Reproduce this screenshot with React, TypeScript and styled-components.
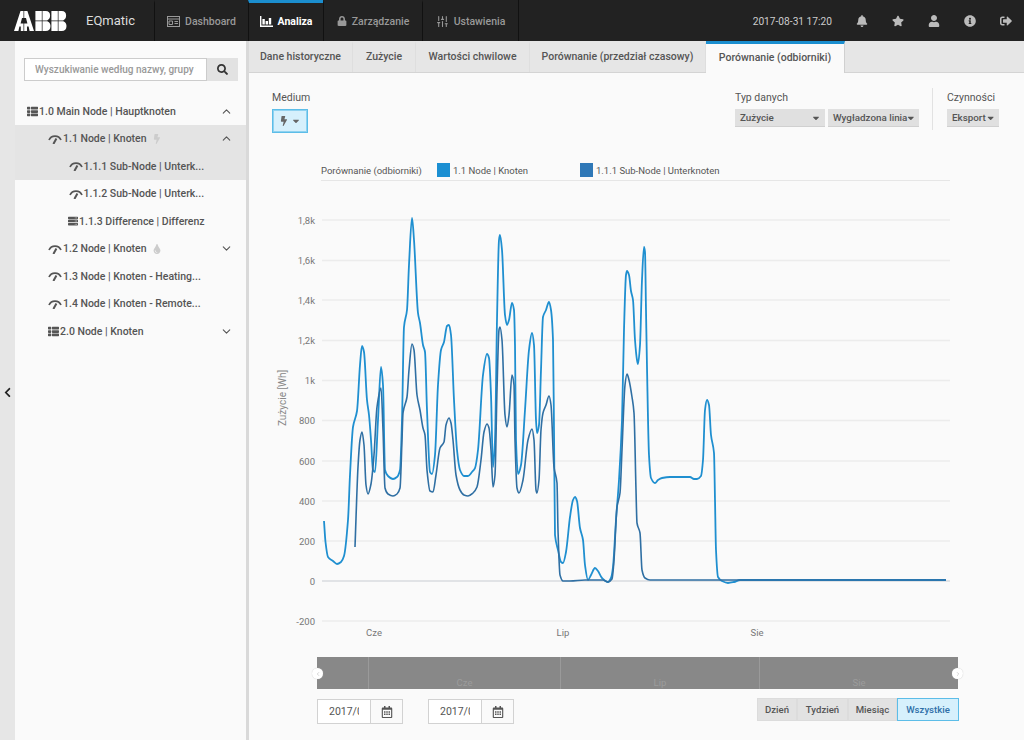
import React from "react";
import styled, { createGlobalStyle } from "styled-components";
import { ChevronDown, ChevronLeft, ChevronRight, ChevronUp, SlidersVertical } from "lucide-react";
import {
	FaBell,
	FaBolt,
	FaCaretDown,
	FaChevronLeft,
	FaInfoCircle,
	FaLock,
	FaRegCalendarAlt,
	FaSearch,
	FaServer,
	FaSignOutAlt,
	FaStar,
	FaThList,
	FaTint,
	FaUser,
} from "react-icons/fa";

const GlobalStyle = createGlobalStyle`
	html, body {
		margin: 0;
		padding: 0;
		background: #fafafa;
	}
	* {
		box-sizing: border-box;
	}
	body {
		font-family: Roboto, "Liberation Sans", sans-serif;
		font-size: 10.5px;
		color: #555;
	}
`;

const lightSeries: number[][] = [
	[324, 521], [325.5, 542], [328, 557], [333, 561], [337, 564], [341, 562], [344, 556], [348, 520], [350, 475], [353, 427], [357, 411], [360, 365], [362, 346], [364, 352], [367, 400], [369, 415], [371, 440], [373, 470], [375, 472], [378, 420], [381, 367], [383, 385], [385, 470], [388, 476], [393, 479], [397, 477], [400, 470], [402, 420], [404, 327], [407, 310], [409, 265], [412, 218], [414, 240], [418, 313], [420, 323], [423, 345], [425, 352], [427, 410], [430, 472], [432, 474], [435, 455], [438, 385], [441, 350], [444, 342], [447, 326], [449, 325], [451, 335], [454, 400], [457, 450], [460, 470], [464, 476], [468, 476], [472, 472], [475, 468], [478, 450], [483, 375], [487, 354], [489, 358], [491, 395], [493, 467], [495, 440], [497, 320], [499, 240], [500, 235], [502, 250], [505, 315], [507, 325], [509, 320], [512, 303], [514, 310], [515, 345], [516, 440], [518, 474], [521, 465], [525, 410], [529, 350], [532, 333], [534, 345], [536, 420], [537, 433], [539, 425], [541, 370], [543, 317], [546, 310], [549, 302], [551, 310], [553, 340], [554, 430], [555, 535], [558, 550], [561, 562], [563, 563], [566, 552], [570, 517], [573, 500], [575, 497], [577, 501], [580, 528], [583, 540], [585, 565], [588, 580], [591, 575], [595, 568], [598, 571], [602, 578], [608, 582], [611, 578], [613, 567], [616, 520], [619, 480], [622, 420], [624, 330], [626, 275], [627, 271], [629, 275], [631, 291], [633, 300], [635, 340], [637, 360], [638, 364], [640, 345], [642, 280], [644, 247], [645, 252], [646, 310], [647, 367], [649, 455], [651, 478], [655, 483], [658, 480], [662, 478], [670, 477], [690, 477], [694, 479], [697, 479], [701, 476], [703, 460], [705, 410], [707, 400], [709, 405], [711, 435], [714, 453], [715, 500], [716, 550], [718, 577], [722, 581], [728, 583], [734, 582], [740, 580], [946, 580],
];

const darkSeries: number[][] = [
	[355, 547], [358, 467], [360, 440], [362, 432], [364, 445], [366, 485], [368, 494], [371, 484], [374, 455], [377, 407], [381, 388], [383, 430], [385, 488], [388, 494], [393, 496], [397, 494], [400, 488], [402, 440], [403, 413], [407, 397], [409, 370], [412, 344], [414, 350], [417, 395], [420, 410], [423, 428], [425, 435], [427, 470], [430, 491], [433, 492], [436, 475], [440, 448], [444, 442], [446, 425], [449, 418], [451, 423], [453, 440], [456, 475], [460, 490], [464, 495], [468, 496], [473, 493], [477, 487], [481, 460], [484, 432], [487, 424], [489, 428], [491, 450], [493, 487], [495, 475], [497, 390], [499, 330], [500, 327], [502, 340], [505, 415], [507, 427], [509, 415], [512, 375], [514, 385], [515, 440], [517, 488], [519, 493], [523, 480], [528, 440], [532, 429], [534, 440], [536, 490], [537, 493], [539, 480], [541, 430], [543, 413], [546, 405], [549, 396], [551, 405], [554, 467], [557, 483], [558, 530], [560, 575], [563, 581], [570, 581], [585, 580], [603, 580], [608, 582], [612, 579], [614, 560], [617, 507], [620, 493], [622, 450], [625, 385], [627, 374], [629, 380], [632, 397], [634, 413], [636, 490], [637, 523], [640, 533], [642, 570], [645, 578], [650, 580], [946, 580],
];

// same idea as d3 curveMonotoneX, peaks stay at their points
const smoothPath = (pts: number[][]) => {
	const slopes: number[] = [];
	for (let i = 0; i < pts.length - 1; i++) {
		slopes.push((pts[i + 1][1] - pts[i][1]) / (pts[i + 1][0] - pts[i][0]));
	}
	const tangents = pts.map((_, i) => {
		if (i === 0) return slopes[0];
		if (i === pts.length - 1) return slopes[i - 1];
		const a = slopes[i - 1];
		const b = slopes[i];
		if (a * b <= 0) return 0;
		return (2 * a * b) / (a + b);
	});
	let d = `M${pts[0][0]} ${pts[0][1]}`;
	for (let i = 0; i < pts.length - 1; i++) {
		const dx = (pts[i + 1][0] - pts[i][0]) / 3;
		d += `C${pts[i][0] + dx} ${pts[i][1] + tangents[i] * dx} ${pts[i + 1][0] - dx} ${pts[i + 1][1] - tangents[i + 1] * dx} ${pts[i + 1][0]} ${pts[i + 1][1]}`;
	}
	return d;
};

const yTicks = [
	["1,8k", 220],
	["1,6k", 260.5],
	["1,4k", 300],
	["1,2k", 340.5],
	["1k", 380.5],
	["800", 420.5],
	["600", 461],
	["400", 501],
	["200", 541],
	["0", 581],
	["-200", 621],
] as const;

const AbbLogo = () => (
	<svg width="53" height="20" viewBox="0 0 53 20" fill="#fff">
		<polygon points="0,20 6.5,0 9.5,0 9.5,7 8,7 6.6,12.5 9.5,12.5 9.5,20 6.8,20 6.8,15.5 5.4,15.5 4.4,20" />
		<polygon points="10.2,0 13.4,0 20,20 15.6,20 14.6,15.5 13,15.5 13,20 10.2,20 10.2,12.5 13.4,12.5 12,7 10.2,7" />
		<path d="M21.4 0h6.4v9.5h-6.4zM21.4 10.2h6.4V20h-6.4zM28.5 0h3.2c3 0 4.4 1.6 4.4 4.6 0 2.4-1 4-3 4.9h-4.6zM28.5 10.2h4.8c2 .8 3.2 2.4 3.2 4.8 0 3.2-1.7 5-4.8 5h-3.2z" />
		<path d="M37.4 0h6.4v9.5h-6.4zM37.4 10.2h6.4V20h-6.4zM44.5 0h3.2c3 0 4.4 1.6 4.4 4.6 0 2.4-1 4-3 4.9h-4.6zM44.5 10.2h4.8c2 .8 3.2 2.4 3.2 4.8 0 3.2-1.7 5-4.8 5h-3.2z" />
	</svg>
);

const GaugeIcon = () => (
	<svg width="14" height="10" viewBox="0 0 14 10" fill="none" stroke="#555">
		<path d="M1 6A6.6 6.6 0 0 1 13 6" strokeWidth="1.7" />
		<path d="M5.4 10L8.4 4.6" strokeWidth="2" />
	</svg>
);

const DashboardIcon = () => (
	<svg width="13" height="11" viewBox="0 0 13 11" fill="none" stroke="#999">
		<rect x="0.5" y="0.5" width="12" height="10" />
		<path d="M0.5 3h12M2 5h3.5v3.5H2zM7.5 5.5H11M7.5 7.5H11" />
	</svg>
);

const AnalizaIcon = () => (
	<svg width="13" height="11" viewBox="0 0 13 11" fill="#fff">
		<path d="M0 0h1.4v9.6H13V11H0zM2.4 3h2.4v5.6H2.4zM5.6 5h2.4v3.6H5.6zM8.8 2h2.4v6.6H8.8z" />
	</svg>
);

const Page = styled.div`
	width: 1024px;
	height: 740px;
	display: flex;
	flex-direction: column;
	overflow: hidden;
`;

const TopBar = styled.header`
	height: 41px;
	flex: none;
	display: flex;
	align-items: stretch;
	background: #222;
`;

const LogoBox = styled.div`
	width: 86px;
	padding-left: 14px;
	display: flex;
	align-items: center;
`;

const Brand = styled.div`
	width: 68px;
	display: flex;
	align-items: center;
	font-size: 13px;
	color: #ddd;
`;

const NavItem = styled.div<{ $active?: boolean; $w: number }>`
	width: ${(p) => p.$w}px;
	display: flex;
	align-items: center;
	justify-content: center;
	gap: 5px;
	border-left: 1px solid #111;
	border-top: 3px solid ${(p) => (p.$active ? "#1b8ecf" : "transparent")};
	padding-bottom: 2px;
	font-weight: ${(p) => (p.$active ? 700 : 500)};
	color: ${(p) => (p.$active ? "#fff" : "#999")};
`;

const NavEnd = styled.div`
	flex: 1;
	border-left: 1px solid #111;
	display: flex;
	align-items: center;
	justify-content: flex-end;
`;

const Clock = styled.span`
	color: #ccc;
	font-size: 10.2px;
	padding-top: 1px;
	margin-right: 12px;
`;

const TopIcon = styled.span`
	width: 36px;
	display: flex;
	justify-content: center;
	color: #bbb;
	font-size: 12px;
`;

const Body = styled.div`
	flex: 1;
	display: flex;
	min-height: 0;
`;

const CollapseStrip = styled.div`
	width: 15px;
	flex: none;
	background: #e6e6e6;
	display: flex;
	align-items: center;
	justify-content: center;
	font-size: 11px;
	color: #222;
	padding-top: 3px;
`;

const Sidebar = styled.aside`
	width: 234px;
	flex: none;
	background: #fafafa;
	border-right: 3px solid #d9d9d9;
	padding-top: 17px;
`;

const SearchRow = styled.div`
	display: flex;
	height: 23px;
	margin: 0 8px 16.5px 9px;
`;

const SearchInput = styled.input`
	width: 183px;
	height: 23px;
	border: 1px solid #ccc;
	background: #fff;
	padding: 0 10px;
	font: 500 10px Roboto, sans-serif;
	color: #888;
	&::placeholder {
		color: #999;
		opacity: 1;
	}
`;

const SearchButton = styled.button`
	width: 31px;
	border: none;
	background: #e2e2e2;
	color: #333;
	font-size: 11px;
	display: flex;
	align-items: center;
	justify-content: center;
`;

const TreeRow = styled.div<{ $indent: number; $selected?: boolean }>`
	height: 27.5px;
	display: flex;
	align-items: center;
	gap: 1px;
	padding-left: ${(p) => p.$indent}px;
	padding-right: 13px;
	background: ${(p) => (p.$selected ? "#e4e4e4" : "transparent")};
	font-weight: 500;
	color: #555;
	white-space: nowrap;
	svg {
		flex: none;
	}
`;

const TreeLabel = styled.span`
	flex: 1;
	display: flex;
	align-items: center;
	gap: 5px;
`;

const Hint = styled.span`
	color: #ccc;
	font-size: 10px;
	display: flex;
`;

const Main = styled.main`
	flex: 1;
	min-width: 0;
	background: #fafafa;
	display: flex;
	flex-direction: column;
`;

const Tabs = styled.nav`
	height: 32px;
	flex: none;
	display: flex;
	background: #e6e6e6;
	border-bottom: 1px solid #d4d4d4;
`;

const Tab = styled.div<{ $active?: boolean; $w: number }>`
	width: ${(p) => p.$w}px;
	display: flex;
	align-items: center;
	justify-content: center;
	font-weight: 500;
	color: #555;
	background: ${(p) => (p.$active ? "#fafafa" : "transparent")};
	border-top: 3px solid ${(p) => (p.$active ? "#1b8ecf" : "transparent")};
	border-right: 1px solid ${(p) => (p.$active ? "#d0d0d0" : "#dedede")};
	margin-bottom: ${(p) => (p.$active ? "-1px" : "0")};
	padding-bottom: 3px;
`;

const Toolbar = styled.div`
	height: 90px;
	flex: none;
	display: flex;
	padding: 15px 25px 0 23px;
`;

const Group = styled.div`
	display: flex;
	flex-direction: column;
	gap: 2px;
`;

const GroupLabel = styled.span`
	font-size: 10.5px;
	color: #555;
	height: 19px;
	line-height: 19px;
	white-space: nowrap;
`;

const GroupRow = styled.div`
	display: flex;
	gap: 3px;
`;

const MediumButton = styled.div`
	width: 36px;
	height: 24px;
	border: 1px solid #5cbde8;
	box-shadow: inset 0 0 0 1px #8fd2f0;
	background: #d6f0fc;
	color: #666;
	display: flex;
	align-items: center;
	justify-content: center;
	gap: 2px;
	font-size: 10px;
`;

const Select = styled.div<{ $w: number }>`
	width: ${(p) => p.$w}px;
	height: 18px;
	background: #e0e0e0;
	border-bottom: 1px solid #d0d0d0;
	display: flex;
	align-items: center;
	justify-content: space-between;
	padding: 0 4px 0 5px;
	font-size: 9.8px;
	font-weight: 500;
	color: #555;
	white-space: nowrap;
`;

const Spacer = styled.div`
	flex: 1;
`;

const Divider = styled.div`
	width: 1px;
	height: 42px;
	background: #e2e2e2;
	margin: 0 14px 0 13px;
`;

const Legend = styled.div`
	height: 18px;
	flex: none;
	margin: 0 74px 0 72px;
	display: flex;
	align-items: flex-start;
	border-bottom: 1px solid #e6e6e6;
	font-size: 9.5px;
	color: #555;
`;

const LegendTitle = styled.span`
	width: 116px;
	line-height: 16px;
`;

const LegendItem = styled.div<{ $w: number }>`
	width: ${(p) => p.$w}px;
	display: flex;
	align-items: flex-start;
	gap: 3px;
	line-height: 16px;
`;

const Swatch = styled.span<{ $color: string }>`
	width: 13px;
	height: 14px;
	background: ${(p) => p.$color};
`;

const ChartSvg = styled.svg`
	display: block;
	flex: none;
	font-family: Roboto, sans-serif;
	font-size: 9.5px;
	fill: #777;
`;

const Navigator = styled.div`
	position: relative;
	height: 32px;
	flex: none;
	margin: 7px 66px 0 68px;
	background: #888;
	display: grid;
	grid-template-columns: 52px 192px 199px 198px;
`;

const NavigatorCell = styled.div`
	border-right: 1px solid #9a9a9a;
	display: flex;
	align-items: flex-end;
	justify-content: center;
	padding-bottom: 1px;
	font-size: 9.5px;
	color: #9c9c9c;
	&:last-of-type {
		border-right: none;
	}
`;

const Handle = styled.span<{ $side: "left" | "right" }>`
	position: absolute;
	top: 11px;
	${(p) => p.$side}: -5px;
	width: 11px;
	height: 11px;
	border-radius: 50%;
	background: #fff;
	box-shadow: 0 0 1px #bbb;
	color: #aaa;
	display: flex;
	align-items: center;
	justify-content: center;
`;

const BottomRow = styled.div`
	flex: none;
	display: flex;
	align-items: flex-start;
	margin: 9px 65px 0 68px;
`;

const DateBox = styled.div`
	width: 86px;
	height: 25px;
	margin-top: 1px;
	display: flex;
	border: 1px solid #d2d2d2;
	margin-right: 25px;
	background: #fff;
`;

const DateInput = styled.input`
	width: 53px;
	border: none;
	border-right: 1px solid #d2d2d2;
	padding: 0 11px;
	font: 10.5px Roboto, sans-serif;
	color: #555;
	background: #fff;
`;

const DateButton = styled.div`
	flex: 1;
	display: flex;
	align-items: center;
	justify-content: center;
	color: #555;
	font-size: 12px;
	background: #fafafa;
`;

const RangeButton = styled.div<{ $active?: boolean; $w: number }>`
	width: ${(p) => p.$w}px;
	height: 23px;
	display: flex;
	align-items: center;
	justify-content: center;
	font-weight: 500;
	font-size: 9.6px;
	background: ${(p) => (p.$active ? "#d6f0fc" : "#e2e2e2")};
	color: ${(p) => (p.$active ? "#2f6fa8" : "#555")};
	border: 1px solid ${(p) => (p.$active ? "#5cbde8" : "#dcdcdc")};
`;

const App = () => {
	return (
		<Page>
			<GlobalStyle />
			<TopBar>
				<LogoBox>
					<AbbLogo />
				</LogoBox>
				<Brand>EQmatic</Brand>
				<NavItem $w={94}>
					<DashboardIcon />
					Dashboard
				</NavItem>
				<NavItem $w={75} $active>
					<AnalizaIcon />
					Analiza
				</NavItem>
				<NavItem $w={99}>
					<FaLock size={10} />
					Zarządzanie
				</NavItem>
				<NavItem $w={96}>
					<SlidersVertical size={13} strokeWidth={2} />
					Ustawienia
				</NavItem>
				<NavEnd>
					<Clock>2017-08-31 17:20</Clock>
					<TopIcon>
						<FaBell />
					</TopIcon>
					<TopIcon>
						<FaStar />
					</TopIcon>
					<TopIcon>
						<FaUser />
					</TopIcon>
					<TopIcon>
						<FaInfoCircle />
					</TopIcon>
					<TopIcon>
						<FaSignOutAlt />
					</TopIcon>
				</NavEnd>
			</TopBar>
			<Body>
				<CollapseStrip>
					<FaChevronLeft />
				</CollapseStrip>
				<Sidebar>
					<SearchRow>
						<SearchInput placeholder="Wyszukiwanie według nazwy, grupy w" />
						<SearchButton>
							<FaSearch />
						</SearchButton>
					</SearchRow>
					<TreeRow $indent={12}>
						<FaThList size={11} />
						<TreeLabel>1.0 Main Node | Hauptknoten</TreeLabel>
						<ChevronUp size={13} />
					</TreeRow>
					<TreeRow $indent={33} $selected>
						<GaugeIcon />
						<TreeLabel>
							1.1 Node | Knoten
							<Hint>
								<FaBolt />
							</Hint>
						</TreeLabel>
						<ChevronUp size={13} />
					</TreeRow>
					<TreeRow $indent={53.5} $selected>
						<GaugeIcon />
						<TreeLabel>1.1.1 Sub-Node | Unterk...</TreeLabel>
					</TreeRow>
					<TreeRow $indent={53.5}>
						<GaugeIcon />
						<TreeLabel>1.1.2 Sub-Node | Unterk...</TreeLabel>
					</TreeRow>
					<TreeRow $indent={53}>
						<FaServer size={10} />
						<TreeLabel>1.1.3 Difference | Differenz</TreeLabel>
					</TreeRow>
					<TreeRow $indent={33}>
						<GaugeIcon />
						<TreeLabel>
							1.2 Node | Knoten
							<Hint>
								<FaTint />
							</Hint>
						</TreeLabel>
						<ChevronDown size={13} />
					</TreeRow>
					<TreeRow $indent={33}>
						<GaugeIcon />
						<TreeLabel>1.3 Node | Knoten - Heating...</TreeLabel>
					</TreeRow>
					<TreeRow $indent={33}>
						<GaugeIcon />
						<TreeLabel>1.4 Node | Knoten - Remote...</TreeLabel>
					</TreeRow>
					<TreeRow $indent={33}>
						<FaThList size={11} />
						<TreeLabel>2.0 Node | Knoten</TreeLabel>
						<ChevronDown size={13} />
					</TreeRow>
				</Sidebar>
				<Main>
					<Tabs>
						<Tab $w={104}>Dane historyczne</Tab>
						<Tab $w={63}>Zużycie</Tab>
						<Tab $w={114}>Wartości chwilowe</Tab>
						<Tab $w={176}>Porównanie (przedział czasowy)</Tab>
						<Tab $w={139} $active>
							Porównanie (odbiorniki)
						</Tab>
					</Tabs>
					<Toolbar>
						<Group>
							<GroupLabel>Medium</GroupLabel>
							<MediumButton>
								<FaBolt />
								<FaCaretDown />
							</MediumButton>
						</Group>
						<Spacer />
						<Group>
							<GroupLabel>Typ danych</GroupLabel>
							<GroupRow>
								<Select $w={90}>
									Zużycie
									<FaCaretDown size={10} />
								</Select>
								<Select $w={91}>
									Wygładzona linia
									<FaCaretDown size={10} />
								</Select>
							</GroupRow>
						</Group>
						<Divider />
						<Group>
							<GroupLabel>Czynności</GroupLabel>
							<Select $w={52}>
								Eksport
								<FaCaretDown size={10} />
							</Select>
						</Group>
					</Toolbar>
					<Legend>
						<LegendTitle>Porównanie (odbiorniki)</LegendTitle>
						<LegendItem $w={143}>
							<Swatch $color="#1b8fd2" />
							1.1 Node | Knoten
						</LegendItem>
						<LegendItem $w={180}>
							<Swatch $color="#2f78b7" />
							1.1.1 Sub-Node | Unterknoten
						</LegendItem>
					</Legend>
					<ChartSvg width="775" height="469" viewBox="249 181 775 469">
						{yTicks.map(([label, y]) => (
							<g key={label}>
								<line
									x1="322"
									x2="950"
									y1={y}
									y2={y}
									stroke={label === "0" ? "#c8ccd2" : "#ececec"}
									strokeWidth={label === "0" ? 1 : 1.4}
								/>
								<text x="315" y={y + 3.5} textAnchor="end">
									{label}
								</text>
							</g>
						))}
						<text
							transform="translate(286 398) rotate(-90)"
							textAnchor="middle"
							fill="#888"
							fontSize="10"
						>
							Zużycie [Wh]
						</text>
						<text x="374" y="636" textAnchor="middle">Cze</text>
						<text x="563" y="636" textAnchor="middle">Lip</text>
						<text x="757" y="636" textAnchor="middle">Sie</text>
						<path d={smoothPath(lightSeries)} fill="none" stroke="#1f8fd0" strokeWidth="1.8" />
						<path d={smoothPath(darkSeries)} fill="none" stroke="#2f6fa3" strokeWidth="1.6" />
					</ChartSvg>
					<Navigator>
						<NavigatorCell />
						<NavigatorCell>Cze</NavigatorCell>
						<NavigatorCell>Lip</NavigatorCell>
						<NavigatorCell>Sie</NavigatorCell>
						<Handle $side="left">
							<ChevronLeft size={6} />
						</Handle>
						<Handle $side="right">
							<ChevronRight size={6} />
						</Handle>
					</Navigator>
					<BottomRow>
						<DateBox>
							<DateInput readOnly value="2017/06/01" />
							<DateButton>
								<FaRegCalendarAlt />
							</DateButton>
						</DateBox>
						<DateBox>
							<DateInput readOnly value="2017/08/31" />
							<DateButton>
								<FaRegCalendarAlt />
							</DateButton>
						</DateBox>
						<Spacer />
						<RangeButton $w={40}>Dzień</RangeButton>
						<RangeButton $w={51}>Tydzień</RangeButton>
						<RangeButton $w={49}>Miesiąc</RangeButton>
						<RangeButton $w={62} $active>
							Wszystkie
						</RangeButton>
					</BottomRow>
				</Main>
			</Body>
		</Page>
	);
};

export default App;
